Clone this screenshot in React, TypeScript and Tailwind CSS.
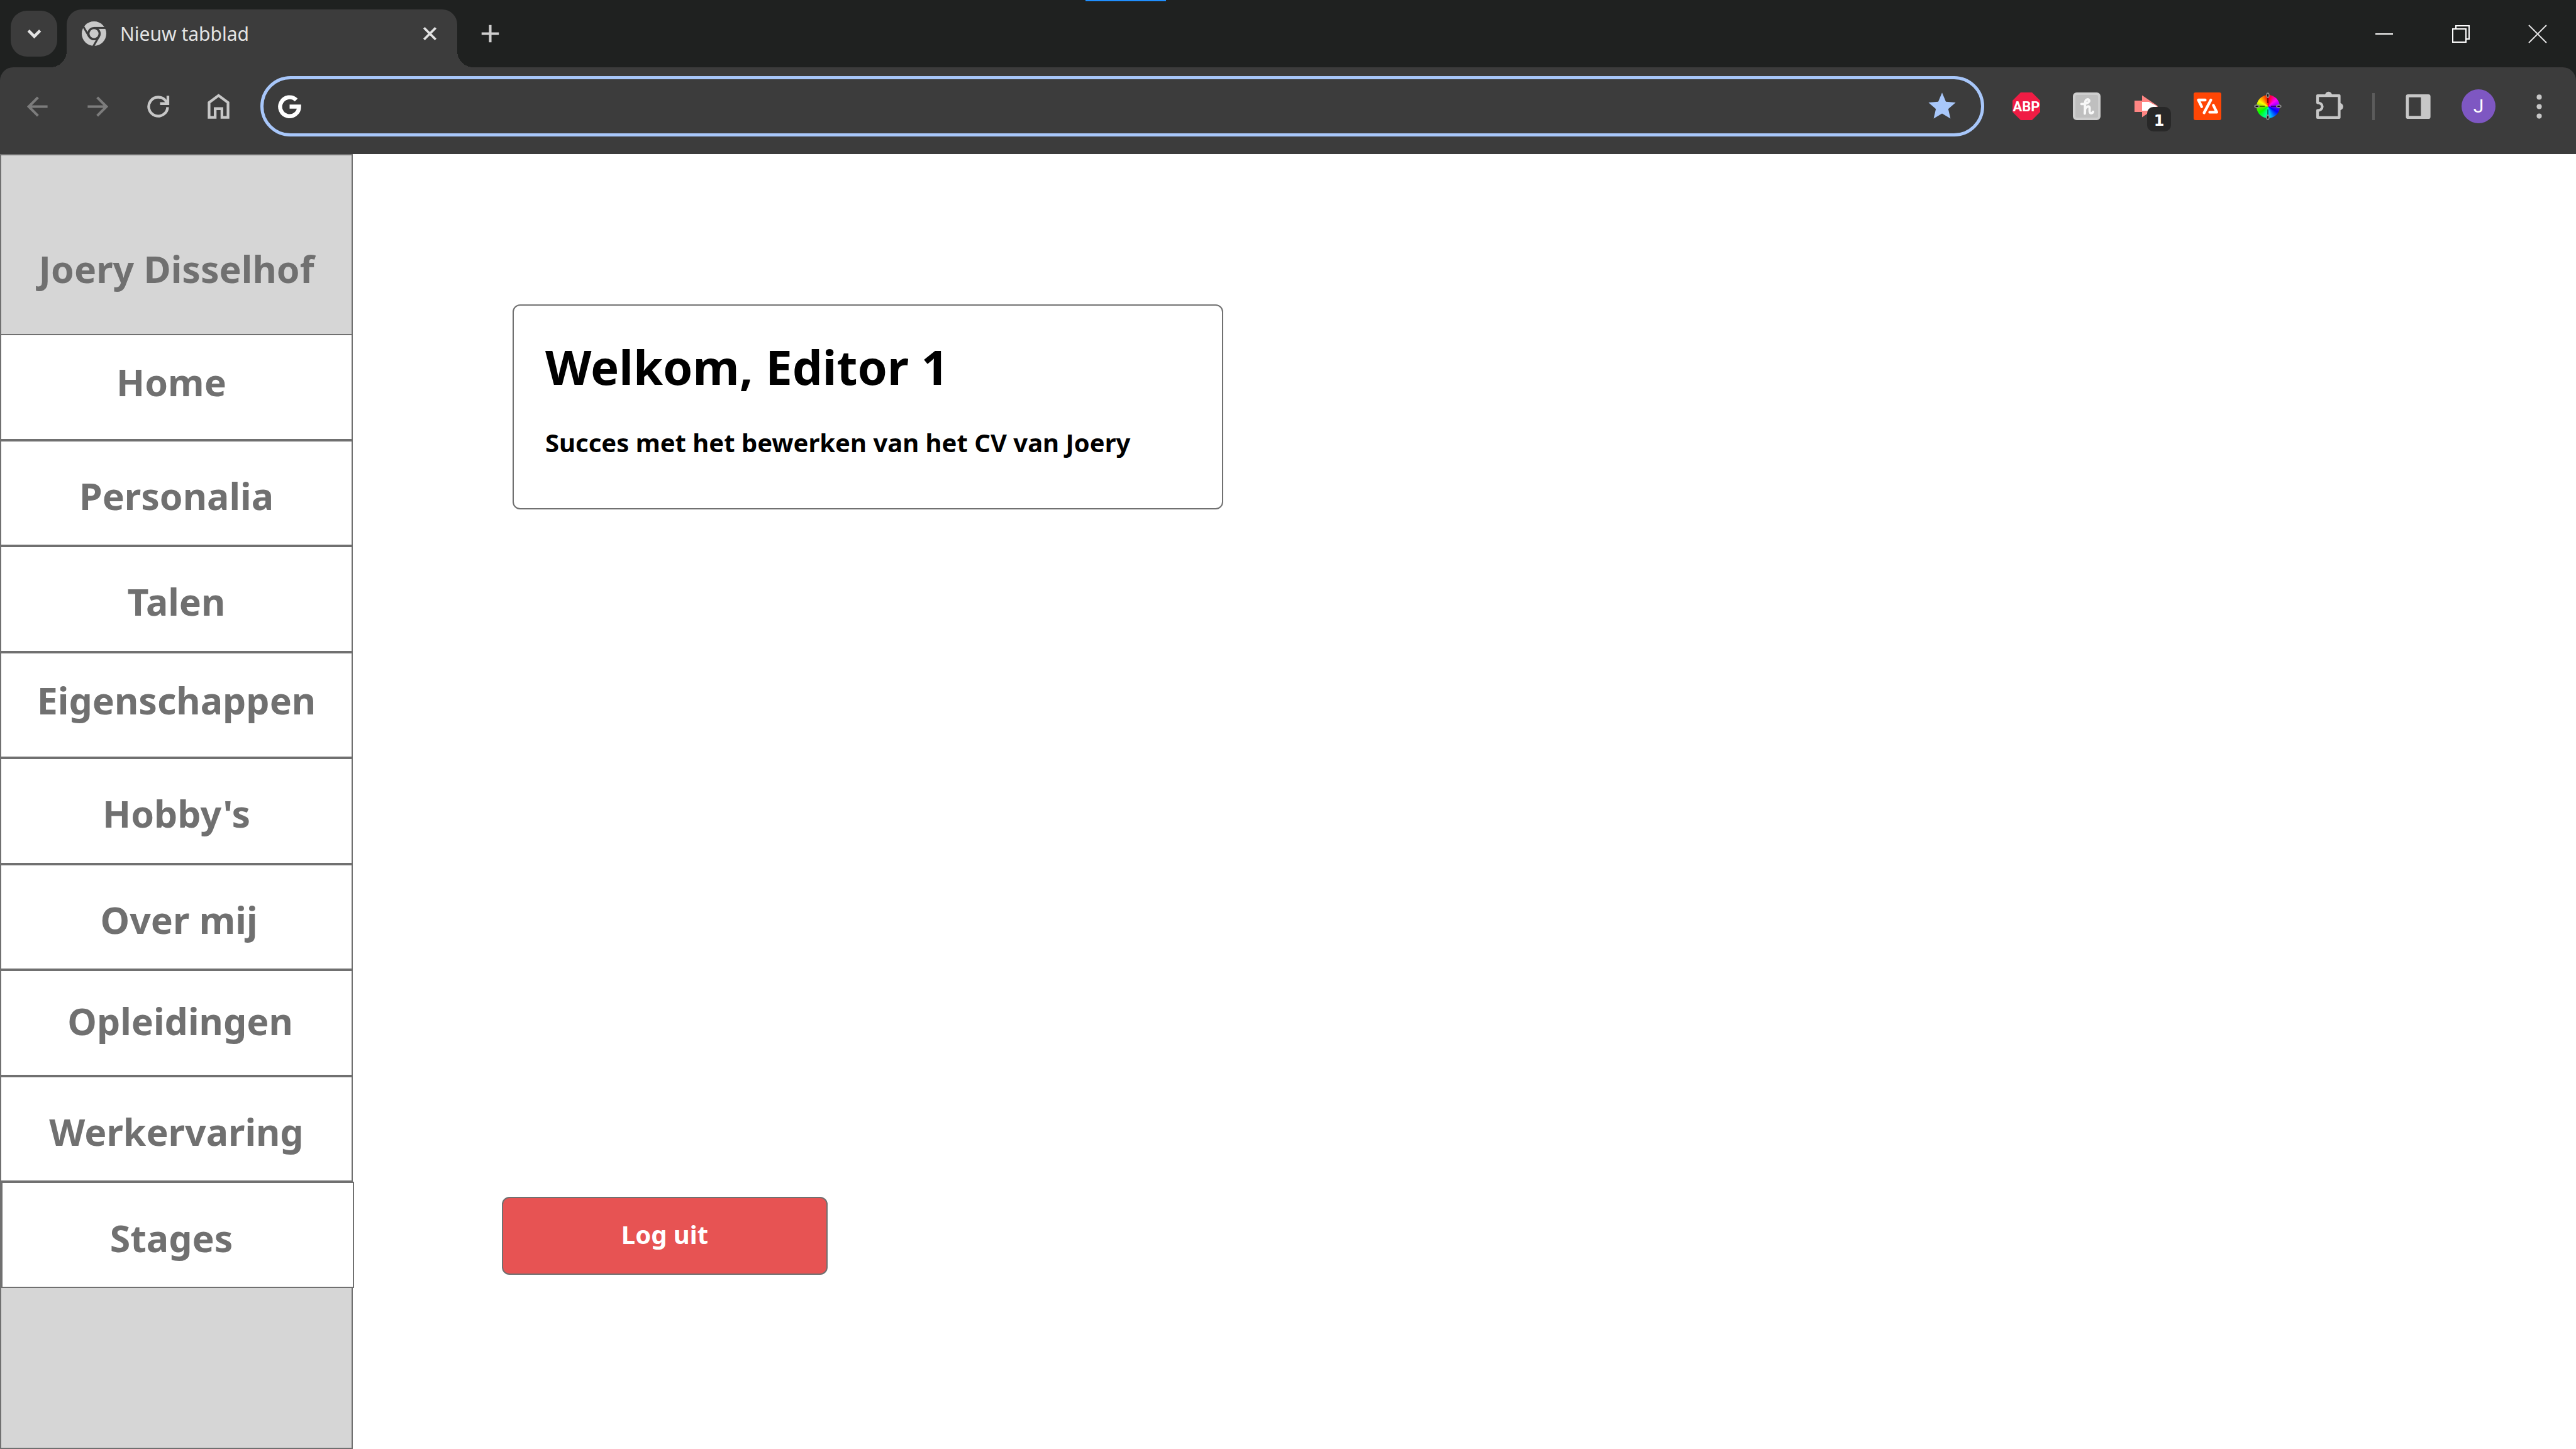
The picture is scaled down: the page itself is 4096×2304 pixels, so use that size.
import type { ReactNode } from "react";

function Icon({ view, className, children }: { view: string; className: string; children: ReactNode }) {
  return (
    <svg viewBox={view} className={`shrink-0 overflow-visible ${className}`} fill="none" aria-hidden="true">
      {children}
    </svg>
  );
}

function ToolButton({ label, children, className = "" }: { label: string; children: ReactNode; className?: string }) {
  return (
    <button type="button" aria-label={label} className={`flex h-24 w-24 shrink-0 items-center justify-center ${className}`}>
      {children}
    </button>
  );
}

function TabStrip() {
  return (
    <div className="relative flex h-[107px] items-center bg-[#1f2120] pl-[17px]">
      <div className="absolute left-[1726px] top-0 h-[2px] w-32 bg-[#1f8fff]" />
      <button type="button" aria-label="Tabbladen zoeken" className="flex h-[73px] w-[74px] items-center justify-center rounded-[26px] bg-[#3c3c3c]">
        <Icon view="0 0 20 20" className="w-[43px]">
          <path d="M5.700 7.700l4.300 4.300 4.300-4.300" stroke="#e3e3e3" strokeWidth="2.200" />
        </Icon>
      </button>
      <div className="relative ml-[15px] flex h-[92px] w-[621px] items-center self-end rounded-t-[24px] bg-[#3c3c3c] pb-4 pl-6 pr-6">
        <div className="absolute -left-[26px] bottom-0 size-[26px] bg-[radial-gradient(circle_at_0_0,transparent_26px,#3c3c3c_26px)]" />
        <div className="absolute -right-[26px] bottom-0 size-[26px] bg-[radial-gradient(circle_at_100%_0,transparent_26px,#3c3c3c_26px)]" />
        <Icon view="-9 -9 18 18" className="w-[39px]">
          <circle r="9" fill="#c9c9c9" />
          <g stroke="#3c3c3c" strokeWidth="1.4">
            <path d="M0-4.2H9.6" />
            <path d="M0-4.2H9.6" transform="rotate(120)" />
            <path d="M0-4.2H9.6" transform="rotate(240)" />
          </g>
          <circle r="4.9" fill="#3c3c3c" />
          <circle r="3.3" fill="#c9c9c9" />
        </Icon>
        <span className="ml-[22px] flex-1 pt-0.5 text-[30px] leading-10 text-[#e3e3e3]">Nieuw tabblad</span>
        <button type="button" aria-label="Tabblad sluiten" className="flex size-10 items-center justify-center">
          <Icon view="0 0 20 20" className="w-[43px]">
            <path d="M5.7 5.7l8.6 8.6M14.3 5.7l-8.6 8.6" stroke="#e3e3e3" strokeWidth="1.8" />
          </Icon>
        </button>
      </div>
      <button type="button" aria-label="Nieuw tabblad openen" className="ml-4 flex size-[73px] items-center justify-center">
        <Icon view="0 0 20 20" className="w-[43px]">
          <path d="M10 3.6v12.8M3.6 10h12.8" stroke="#cfcfcf" strokeWidth="1.9" />
        </Icon>
      </button>
      <div className="ml-auto flex">
        <button type="button" aria-label="Minimaliseren" className="flex h-[73px] w-[122px] items-center justify-center">
          <span className="h-[2px] w-7 bg-white" />
        </button>
        <button type="button" aria-label="Verkleinen" className="flex h-[73px] w-[122px] items-center justify-center">
          <Icon view="0 0 28 28" className="w-7">
            <path d="M1 6h21v21H1zM6 6V1h21v21h-5" stroke="#fff" strokeWidth="2" />
          </Icon>
        </button>
        <button type="button" aria-label="Sluiten" className="flex h-[73px] w-[122px] items-center justify-center">
          <Icon view="0 0 28 28" className="w-7">
            <path d="M0 0l28 28M28 0L0 28" stroke="#e0e0e0" strokeWidth="2" />
          </Icon>
        </button>
      </div>
    </div>
  );
}

function Toolbar() {
  return (
    <div className="bg-[#1f2120]">
      <div className="flex h-[138px] items-center rounded-t-[21px] bg-[#3c3c3c] px-[11px] pb-[14px]">
        <ToolButton label="Vorige">
          <Icon view="0 0 20 20" className="w-[43px]">
            <path d="M17.5 10H4M10.4 3.2L3.6 10l6.8 6.8" stroke="#7c7c7c" strokeWidth="1.9" />
          </Icon>
        </ToolButton>
        <ToolButton label="Volgende">
          <Icon view="0 0 20 20" className="w-[43px]">
            <path d="M2.5 10H16M9.6 3.2l6.8 6.8-6.8 6.8" stroke="#7c7c7c" strokeWidth="1.9" />
          </Icon>
        </ToolButton>
        <ToolButton label="Vernieuwen">
          <Icon view="0 0 20 20" className="w-[43px]">
            <path d="M17 10.4A7 7 0 1 1 15.6 5.8L17 7.6" stroke="#c7c7c7" strokeWidth="2" />
            <path d="M17.2 2v5.8H11.4" stroke="#c7c7c7" strokeWidth="2" />
          </Icon>
        </ToolButton>
        <ToolButton label="Startpagina">
          <Icon view="0 0 20 20" className="w-[43px]">
            <path d="M3 18V7l7-5.2L17 7v11h-4.5v-6.5h-5V18z" stroke="#c7c7c7" strokeWidth="2" />
          </Icon>
        </ToolButton>
        <div className="ml-[19px] flex h-24 min-w-0 flex-1 items-center rounded-full border-[5px] border-[#a8c7fa] pl-5 pr-9">
          <Icon view="0 0 20 20" className="w-[43px]">
            <path d="M14.9 5.1A7 7 0 1 0 17 10H10" stroke="#fff" strokeWidth="3" />
          </Icon>
          <input aria-label="Adresbalk" className="mx-5 h-16 min-w-0 flex-1 bg-transparent text-[30px] text-white outline-none" />
          <button type="button" aria-label="Bladwijzer">
            <Icon view="0 0 24 24" className="w-[52px]">
              <path d="M12 17.27L18.18 21l-1.64-7.03L22 9.24l-7.19-.61L12 2 9.19 8.63 2 9.24l5.46 4.73L5.82 21z" fill="#a8c7fa" />
            </Icon>
          </button>
        </div>
        <ToolButton label="Adblock Plus" className="ml-[19px]">
          <Icon view="0 0 44 44" className="w-11">
            <path d="M13 0h18l13 13v18L31 44H13L0 31V13z" fill="#f01c44" />
            <text x="22" y="30" textAnchor="middle" fontFamily="Roboto, sans-serif" fontWeight="700" fontSize="22" fill="#fff">
              ABP
            </text>
          </Icon>
        </ToolButton>
        <ToolButton label="Honey">
          <Icon view="0 0 22 22" className="w-11">
            <rect x="1" y="1" width="20" height="20" rx="2" fill="#bfbfbf" stroke="#cecece" strokeWidth="2" />
            <path
              d="M6.800 9.200C10 9.400 13.200 8.200 13 6.400 12.800 5 10.400 5.200 9.900 7.200 9.400 9.400 9.800 13 9.500 16.800M9.600 13.500C10.400 11.400 13 10.200 13.300 12 13.500 13.500 12.700 16.200 14.200 16.500 15.200 16.600 15.900 15.900 16.100 15.400"
              stroke="#f8f8f8"
              strokeWidth="1.900"
              strokeLinecap="round"
            />
          </Icon>
        </ToolButton>
        <ToolButton label="Extensie met 1 melding" className="relative">
          <Icon view="0 0 22 22" className="w-11">
            <path d="M1 6.500h6V2.300L19.800 11 7 19.700v-4.200H1z" fill="#ff8583" />
            <path d="M7 7.500h5.500L19 11l-4.500 3.500H7z" fill="#fff" />
          </Icon>
          <span className="absolute bottom-2 right-2.5 flex h-[39px] w-[38px] items-center justify-center rounded-[10px] bg-[#282828] pt-1 font-['DejaVu_Sans'] text-[24px] font-bold leading-6 text-white">
            1
          </span>
        </ToolButton>
        <ToolButton label="Codeverkorter">
          <Icon view="0 0 22 22" className="w-11">
            <rect width="22" height="22" rx="1.500" fill="#ff4605" />
            <path
              d="M9.200 6H3.800L6.400 11.300M13.700 6L8.300 16.200M15.700 10.200L18.400 15.700H12.800"
              stroke="#fff"
              strokeWidth="2.200"
              strokeLinejoin="round"
              strokeLinecap="round"
            />
          </Icon>
        </ToolButton>
        <ToolButton label="Kleurkiezer">
          <span className="relative flex size-[37px] items-center justify-center rounded-full bg-[conic-gradient(#f00_0deg,#ff0060_20deg,#f0f_50deg,#90f_80deg,#00f_120deg,#0bf_165deg,#0fa_190deg,#0f0_235deg,#7fe000_270deg,#ff0_300deg,#ff8000_330deg,#f00_360deg)]">
            <Icon view="-11 -11 22 22" className="w-11">
              <path d="M0-8v5.500M0 8V2.500M-8 0h5.500M8 0H2.500" stroke="#000" strokeOpacity="0.5" strokeWidth="1" />
              <g fill="#000" stroke="#8c8c8c" strokeWidth="0.9">
                <ellipse cy="-8.700" rx="0.900" ry="1.700" />
                <ellipse cy="8.700" rx="0.900" ry="1.700" />
                <ellipse cx="-8.700" rx="1.700" ry="0.900" />
                <ellipse cx="8.700" rx="1.700" ry="0.900" />
              </g>
            </Icon>
          </span>
        </ToolButton>
        <ToolButton label="Extensies">
          <Icon view="0 0 24 24" className="w-[51px]">
            <path d="M20 3.800v16.400H3.800v-5.300c2.100-.1 3.500-1.300 3.500-2.900S5.900 9.200 3.800 9.100V3.800z" stroke="#c7c7c7" strokeWidth="2" strokeLinejoin="round" />
            <path d="M9.200 4a2.800 3.200 0 0 1 5.600 0zM20 9.200a3 2.800 0 0 1 0 5.600z" fill="#c7c7c7" />
          </Icon>
        </ToolButton>
        <div className="flex w-[47px] shrink-0 justify-center">
          <span className="h-[43px] w-1 bg-[#5c5c5c]" />
        </div>
        <ToolButton label="Zijpaneel">
          <Icon view="0 0 20 20" className="w-[43px]">
            <rect x="1.800" y="2" width="16" height="16" rx="0.500" stroke="#c7c7c7" strokeWidth="2.200" />
            <path d="M11.800 2h6v16h-6z" fill="#c7c7c7" />
          </Icon>
        </ToolButton>
        <ToolButton label="Profiel">
          <span className="flex size-[54px] items-center justify-center rounded-full bg-[#7e57c2] font-[Roboto] text-[30px] leading-8 text-white">J</span>
        </ToolButton>
        <ToolButton label="Menu">
          <Icon view="0 0 20 20" className="w-[43px]">
            <g fill="#c7c7c7">
              <circle cx="10" cy="3" r="1.900" />
              <circle cx="10" cy="10" r="1.900" />
              <circle cx="10" cy="17" r="1.900" />
            </g>
          </Icon>
        </ToolButton>
      </div>
    </div>
  );
}

const navItems = [
  { label: "Home", pad: "pb-4 pr-4" },
  { label: "Personalia", pad: "pt-2" },
  { label: "Talen", pad: "pt-2" },
  { label: "Eigenschappen", pad: "pb-4" },
  { label: "Hobby's", pad: "pt-2" },
  { label: "Over mij", pad: "pt-2 pl-2" },
  { label: "Opleidingen", pad: "pb-2 pl-3" },
  { label: "Werkervaring", pad: "pt-2" },
  { label: "Stages", pad: "pt-2 pr-5", shifted: true },
];

function Sidebar() {
  return (
    <aside className="flex w-[561px] shrink-0 flex-col border-2 border-[#707070] bg-[#d6d6d6] text-[59px] font-bold leading-[64px] text-[#707070]">
      <div className="flex h-[284px] items-center justify-center pt-[76px]">Joery Disselhof</div>
      <nav className="grid flex-1 auto-rows-fr">
        {navItems.map((item) => (
          <a
            key={item.label}
            href="#"
            className={`flex items-center justify-center border-[#707070] bg-white ${item.shifted ? "-mr-1 border-2" : "border-y-2"} ${item.pad}`}
          >
            {item.label}
          </a>
        ))}
      </nav>
      <div className="h-[254px]" />
    </aside>
  );
}

export default function App() {
  return (
    <div className="flex min-h-screen w-full flex-col bg-white font-['Noto_Sans',sans-serif]">
      <header>
        <TabStrip />
        <Toolbar />
      </header>
      <div className="flex flex-1">
        <Sidebar />
        <main className="flex flex-1 flex-col items-start justify-between pb-[277px] pl-[237px] pt-[239px]">
          <section className="ml-[17px] w-[1130px] rounded-[12px] border-2 border-[#707070] pb-[74px] pl-[50px] pt-[57px] font-bold text-black">
            <h1 className="text-[76px] leading-[80px]">Welkom, Editor 1</h1>
            <p className="mt-[51px] text-[40px] leading-[60px]">Succes met het bewerken van het CV van Joery</p>
          </section>
          <button
            type="button"
            className="flex h-[124px] w-[518px] items-center justify-center rounded-[12px] border-2 border-[#707070] bg-[#e75353] pb-1 text-[40px] font-bold leading-[60px] text-white"
          >
            Log uit
          </button>
        </main>
      </div>
    </div>
  );
}
